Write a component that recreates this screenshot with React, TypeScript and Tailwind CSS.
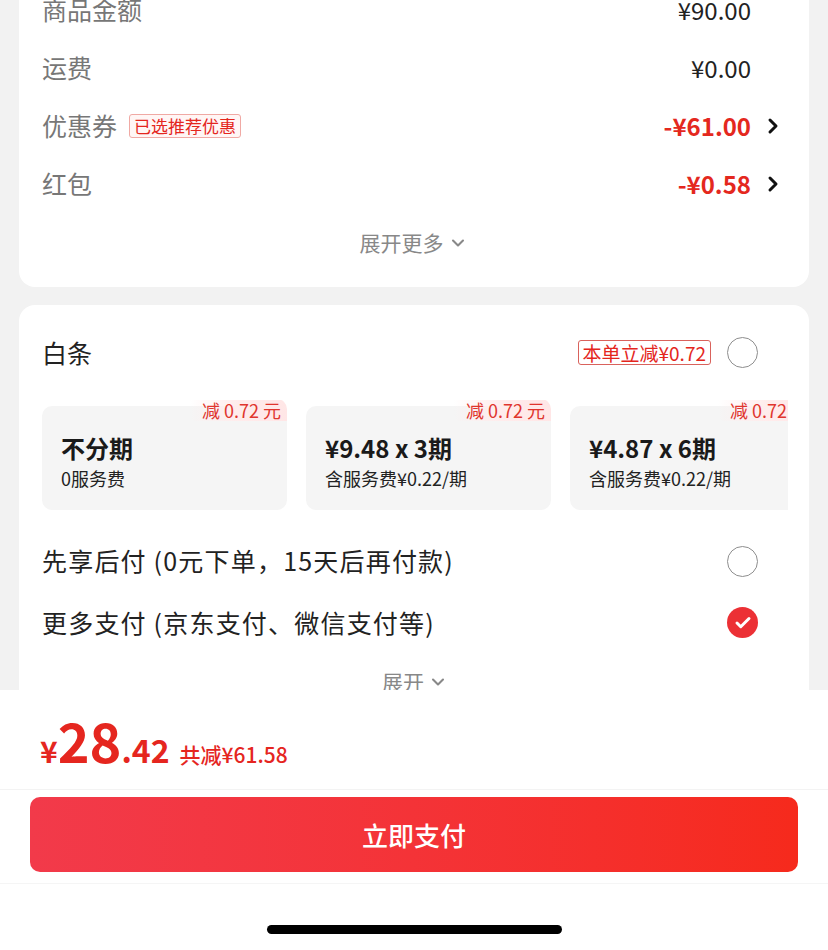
import { ChevronDown, ChevronRight, Check } from 'lucide-react'

const font = { fontFamily: '"Noto Sans CJK SC", "Noto Sans", sans-serif' }

type Plan = { title: string; sub: string }

const plans: Plan[] = [
  { title: '不分期', sub: '0服务费' },
  { title: '¥9.48 x 3期', sub: '含服务费¥0.22/期' },
  { title: '¥4.87 x 6期', sub: '含服务费¥0.22/期' },
]

function Row({
  label,
  value,
  red,
  tag,
  arrow,
}: {
  label: string
  value: string
  red?: boolean
  tag?: string
  arrow?: boolean
}) {
  return (
    <div className="flex h-[58px] items-center">
      <span className="text-[25px] text-[#777]">{label}</span>
      {tag && (
        <span className="ml-3 rounded-[3px] border border-[#f0a9a4] bg-[#fff6f5] px-1 text-[17px] leading-[22px] text-[#e4261d]">
          {tag}
        </span>
      )}
      <span
        className={`ml-auto text-[24px] ${red ? 'font-bold text-[#e4281e]' : 'text-[#222]'}`}
      >
        {value}
      </span>
      <span className="flex w-[34px] shrink-0 justify-end">
        {arrow && <ChevronRight size={24} strokeWidth={3} className="text-[#111]" />}
      </span>
    </div>
  )
}

function Radio({ checked }: { checked?: boolean }) {
  if (checked)
    return (
      <span className="flex h-[31px] w-[31px] shrink-0 items-center justify-center rounded-full bg-[#ec3035]">
        <Check size={18} strokeWidth={4} className="text-white" />
      </span>
    )
  return <span className="block h-[31px] w-[31px] shrink-0 rounded-full border-[1.5px] border-[#8e8e8e]" />
}

export default function App() {
  return (
    <div style={font} className="flex h-[950px] flex-col overflow-hidden bg-[#f2f2f2]">
      <div className="flex-1 overflow-hidden px-[19px]">
        <div className="-mt-[19px] rounded-b-[16px] bg-white pl-[23px] pr-[24px] pb-[14px]">
          <Row label="商品金额" value="¥90.00" />
          <Row label="运费" value="¥0.00" />
          <Row label="优惠券" value="-¥61.00" red tag="已选推荐优惠" arrow />
          <Row label="红包" value="-¥0.58" red arrow />
          <div className="flex h-[60px] items-center justify-center text-[21px] text-[#888]">
            展开更多
            <ChevronDown size={20} strokeWidth={2.5} className="ml-1 text-[#888]" />
          </div>
        </div>

        <div className="mt-[18px] rounded-t-[16px] bg-white pt-[20px] pl-[23px] pr-[21px]">
          <div className="flex h-[55px] items-center pr-[30px]">
            <span className="text-[25px] text-[#222]">白条</span>
            <span className="ml-auto mr-[16px] rounded-[3px] border border-[#d9625c] px-1 text-[19px] leading-[23px] text-[#e4261d]">
              本单立减¥0.72
            </span>
            <Radio />
          </div>

          <div className="mt-[20px] flex gap-[19px] overflow-hidden pt-[6px]">
            {plans.map((p) => (
              <div
                key={p.title}
                className="relative flex h-[104px] w-[245px] shrink-0 flex-col justify-center rounded-[10px] bg-[#f5f5f5] pl-[19px]"
              >
                <span className="absolute -top-[7px] right-0 rounded-tr-[10px] rounded-bl-[6px] bg-gradient-to-r from-[#ffeeee]/0 via-[#ffecec] to-[#ffe6e6] pl-[12px] pr-[6px] text-[18px] leading-[22px] text-[#e0352e]">
                  减 0.72 元
                </span>
                <span className="mt-[6px] text-[24px] leading-[32px] font-bold text-[#1a1a1a]">{p.title}</span>
                <span className="mt-[2px] text-[18px] leading-[24px] text-[#222]">{p.sub}</span>
              </div>
            ))}
          </div>

          <div className="mt-[20px] flex h-[62px] items-center pr-[30px]">
            <span className="text-[25px] tracking-[1.2px] text-[#222]">先享后付 (0元下单，15天后再付款)</span>
            <span className="ml-auto">
              <Radio />
            </span>
          </div>
          <div className="flex h-[61px] items-center pr-[30px]">
            <span className="text-[25px] tracking-[1.2px] text-[#222]">更多支付 (京东支付、微信支付等)</span>
            <span className="ml-auto">
              <Radio checked />
            </span>
          </div>
          <div className="flex h-[58px] items-center justify-center text-[21px] text-[#888]">
            展开
            <ChevronDown size={20} strokeWidth={2.5} className="ml-1 text-[#888]" />
          </div>
        </div>
      </div>

      <div className="h-[260px] shrink-0 bg-white">
        <div className="flex h-[100px] items-baseline border-b border-[#f3f3f3] pl-[40px] pt-[18px] text-[#e5261f]">
          <span className="text-[30px] font-bold">¥</span>
          <span className="text-[54px] leading-[64px] font-bold">28</span>
          <span className="text-[32px] font-bold">.42</span>
          <span className="ml-[10px] text-[21px] font-medium">共减¥61.58</span>
        </div>
        <div className="border-b border-[#f5f5f5] px-[30px] pt-[7px] pb-[11px]">
          <button className="flex h-[75px] w-full items-center justify-center rounded-[10px] bg-gradient-to-r from-[#f23a4a] to-[#f62a1c] text-[26px] font-medium text-white">
            立即支付
          </button>
        </div>
        <div className="flex justify-center pt-[41px]">
          <span className="h-[9px] w-[295px] rounded-full bg-black" />
        </div>
      </div>
    </div>
  )
}
